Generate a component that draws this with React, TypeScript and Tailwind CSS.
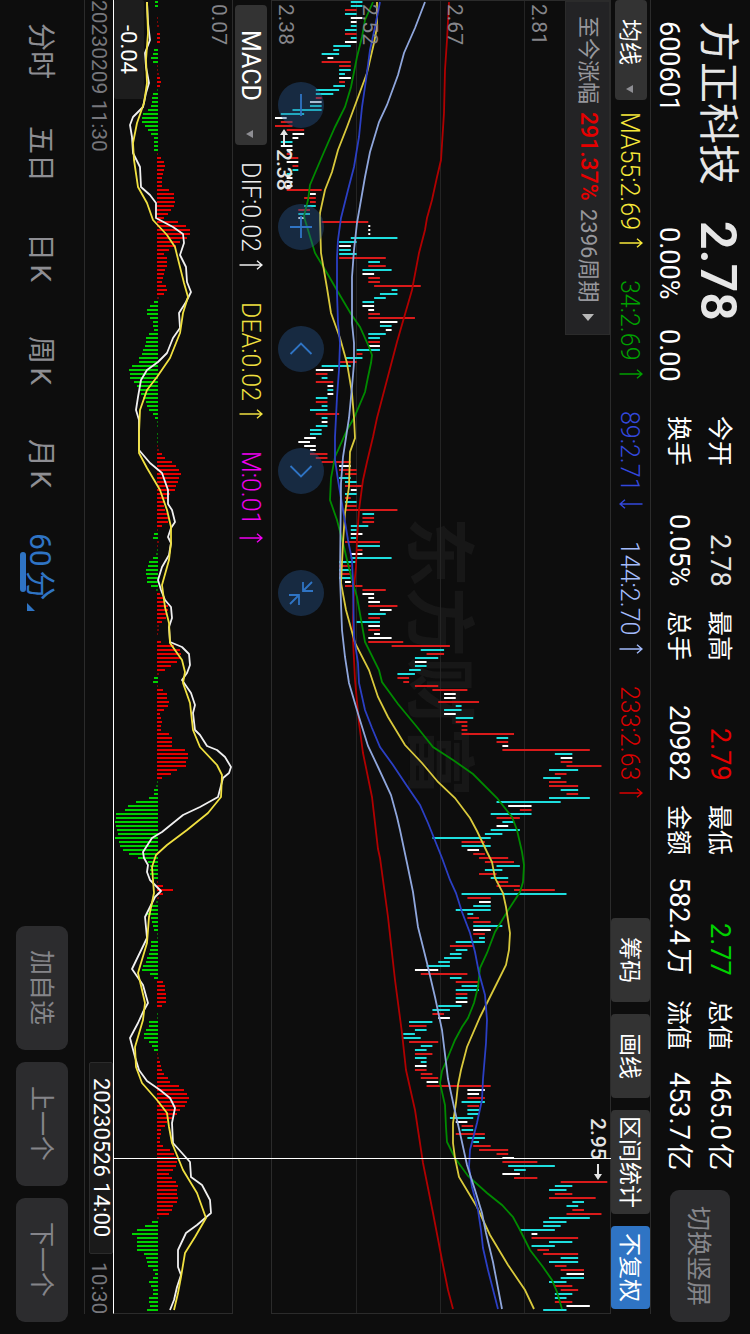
import type { ReactNode } from "react";
import clsx from "clsx";

// The page is a landscape screen held upright: everything is set in
// vertical-rl with sideways glyphs, so "rows" run from top to bottom.

const PLOT_LENGTH = 1314;
const STEP = 4;
const CURSOR = `${(1158 / PLOT_LENGTH) * 100}%`;

// colour, low and high in cents above 2.38
const CANDLES = `
c13-15 c13-15 r12-14 c12-14 w13-15 w13-14 c13-14 c12-14 r12-14 c13-14
w12-14 c10-13 c10-11 c8-11 w9-10 r8-13 r11-13 c11-13 c11-12 w11-13
r11-12 c10-12 c7-11 c7-10 r7-8 w6-8 c6-8 c3-8 c1-5 w0-2
r1-3 r0-3 r2-5 w3-5 w3-4 c1-3 w1-3 w2-3 r2-3 r2-4
w2-4 r3-4 c3-4 c2-3 w2-3 w2-3 w2-3 r2-8 w6-7 r5-7
r6-7 c5-7 r4-6 c4-6 w4-5 r8-16 w16-16 w16-16 w16-16 c13-21
c11-14 w11-13 c11-13 c11-14 r11-19 c16-18 r16-19 c15-20 w15-17 r16-18
r16-18 r17-25 c20-21 c18-21 c17-19 c15-17 w15-17 w16-17 r16-18 r16-24
w18-21 c18-20 w19-20 c16-19 c16-18 r16-18 w16-18 c14-18 r14-15 c12-15
r11-14 c8-13 w7-10 r7-9 c8-9 r7-10 w9-10 c9-10 w9-10 c7-9
r7-9 c8-9 c6-9 r7-11 c8-9 w8-9 c7-9 c6-8 c6-8 w5-7
w4-6 w5-7 w6-7 r6-9 r7-9 r8-13 w11-13 r11-14 r12-14 c11-13
c12-14 r12-15 w13-14 c12-14 r12-13 c12-14 r12-14 r12-21 c15-17 r15-17
r15-17 c13-16 c13-14 w13-15 c13-14 r12-18 c14-18 r14-15 w13-15 c13-20
c11-14 r11-13 c11-13 r11-13 c11-13 w12-13 r12-15 r15-19 w15-17 w16-17
w16-18 r16-21 w18-20 c16-19 r16-18 c14-18 w16-18 r16-18 w17-18 w16-20
r16-22 r20-30 c25-29 r26-29 c24-28 w24-26 c24-26 c23-25 c21-24 r21-23
r22-23 r24-28 r27-33 w29-31 w29-31 r28-35 c31-32 c29-32 w29-31 c31-34
r31-33 r32-33 r32-33 r32-41 c38-40 r38-40 w39-40 r39-54 c48-51 w49-51
r49-51 r50-56 c47-52 r48-50 c46-49 r47-50 r47-52 c49-52 r50-52 c47-54
c38-49 w40-44 r42-44 c37-44 r38-42 c39-41 w38-40 c37-42 c36-39 c27-37
r32-36 c32-37 w33-35 r34-36 r35-40 r36-41 c38-42 c36-39 r35-38 c37-40
r38-40 r38-42 r41-48 c32-50 r33-37 w35-37 c34-37 c31-37 c33-34 r33-35
r34-37 c34-39 w34-37 r34-36 c35-36 c31-36 r30-34 c31-33 c30-32 c29-32
c28-30 c26-30 w24-28 r25-33 c30-32 r31-35 c32-35 c31-35 r31-33 c31-33
w31-33 c28-32 c27-30 r27-29 w28-30 c23-27 r23-26 c24-26 c22-24 c22-25
r23-28 c25-27 c24-26 r24-27 c24-26 c25-26 w24-26 r24-26 r25-27 r25-28
w26-28 r26-37 w33-36 w33-35 r33-36 c32-36 r33-35 c33-35 c33-35 c30-34
w31-33 r32-34 c32-34 r31-36 c33-36 c34-35 r34-37 r35-40 r38-40 w39-41
r39-45 c40-48 c41-43 w39-42 r41-45 r49-57 c48-51 c47-50 r48-51 r47-55
c51-53 c50-52 r51-53 r50-56 c47-54 c46-50 c46-49 c42-48 w44-45 r44-52
c47-51 c44-48 r45-47 r46-52 c49-52 c47-52 r48-50 r49-53 w50-53 c49-53
c47-50 r48-51 r49-52 c48-51 c48-50 r48-51 w50-54 c46-50`
  .trim()
  .split(/\s+/);

const CANDLE_FILL: Record<string, string> = {
  c: "#1edede",
  r: "#d91a1a",
  w: "#ffffff",
};

const MACD_BARS = [
  -3, -3, 0, 0, 1, 1, 2, 0, 3, 3, 3, 0, -4, -5, -7, -5, 1, 1, 2, 3,
  4, 3, -1, -5, -6, -6, -7, -10, -15, -16, -16, -13, -10, -7, -4, -4, -4, -4, 1, 4,
  7, 8, 7, 6, 5, 5, 5, 12, 17, 17, 18, 17, 14, 11, 7, 21, 29, 33, 33, 30,
  23, 19, 12, 7, 10, 10, 10, 8, 7, 6, 5, 9, 10, 7, 2, -4, -8, -11, -11, -8,
  -5, -5, -4, -9, -12, -12, -13, -15, -16, -19, -19, -26, -29, -28, -28, -24, -21, -18, -17, -15,
  -12, -11, -9, -5, -3, -1, -1, 0, -1, -1, -1, 1, 2, 5, 8, 15, 19, 22, 24, 22,
  21, 19, 18, 13, 10, 8, 7, 8, 10, 11, 11, 5, 1, -4, -5, 2, 1, -1, -2, -5,
  -9, -10, -12, -12, -11, -11, -7, -2, 3, 6, 8, 11, 11, 10, 9, 5, 2, 2, 1, 0,
  4, 17, 23, 24, 23, 20, 14, 8, 2, -4, -5, 1, 6, 10, 10, 12, 11, 7, 3, 4,
  5, 4, 4, 12, 15, 15, 15, 28, 31, 31, 29, 29, 20, 14, 5, -1, -2, -4, -4, -9,
  -22, -30, -33, -42, -42, -43, -42, -41, -40, -43, -39, -38, -35, -29, -20, -10, -8, -8, -8, -4,
  1, 6, 16, 6, 2, -2, -6, -9, -11, -7, -6, -5, -4, -1, -1, -7, -7, -8, -9, -11,
  -12, -15, -16, -8, -4, 6, 8, 8, 9, 9, 9, 5, 0, -1, -1, -9, -9, -12, -14, -14,
  -9, -6, -4, 1, 2, 3, 4, 5, 7, 11, 13, 22, 27, 30, 32, 30, 28, 23, 20, 15,
  10, 8, 4, 4, 3, 3, 6, 13, 17, 19, 20, 19, 16, 12, 15, 19, 21, 20, 20, 21,
  20, 16, 15, 12, 2, -6, -13, -21, -26, -21, -21, -21, -21, -14, -12, -11, -10, -5, -3, -5,
  -9, -7, -5, -5, -9, -9, -8, -11,
];

const AVERAGES = [
  {
    stroke: "#b00000",
    points:
      "449,2 447,40 445,70 444,113 441,160 437,177 432,200 427,218 425,230 419,253 412,290 397,342 387,380 377,418 373,437 367,462 363,480 359,510 357,540 356,567 354,587 353,617 353,640 355,680 359,723 363,753 372,797 378,849 380,858 388,917 395,980 402,1033 406,1070 415,1110 423,1163 433,1213 442,1260 448,1290 453,1309",
  },
  {
    stroke: "#008a00",
    points:
      "373,2 365,20 362,37 357,57 351,87 345,107 335,127 324,152 315,173 310,185 308,200 304,216 305,220 315,253 327,273 338,292 351,314 360,327 369,347 372,355 371,363 368,377 365,392 354,418 347,430 335,457 331,478 330,500 337,520 343,543 347,560 352,580 357,597 362,625 365,642 379,670 382,682 398,704 417,727 433,747 453,760 473,774 497,798 512,817 517,830 522,852 524,865 523,882 520,892 507,912 495,932 487,953 480,968 478,987 474,1003 468,1018 462,1027 455,1040 448,1057 442,1071 440,1083 445,1105 446,1127 447,1142 455,1158 468,1176 487,1193 502,1205 513,1217 520,1230 530,1250 543,1267 552,1280 557,1292 562,1309",
  },
  {
    stroke: "#d9c93c",
    points:
      "377,2 377,27 374,43 367,73 357,100 347,127 338,150 332,172 325,190 320,213 320,220 321,253 327,288 331,313 340,338 347,363 352,393 354,418 355,438 350,452 349,487 345,513 343,543 341,583 346,610 355,643 369,670 378,697 388,717 405,745 422,763 438,782 455,798 470,818 477,831 487,852 492,862 495,878 503,893 506,907 510,933 509,950 506,965 497,983 480,1017 467,1047 461,1070 458,1085 456,1103 453,1123 453,1143 455,1158 459,1177 477,1207 490,1235 508,1265 525,1290 534,1309",
  },
  {
    stroke: "#2b3fc4",
    points:
      "380,2 375,27 370,50 366,80 362,107 359,137 354,167 348,190 341,218 338,240 337,257 337,293 338,323 340,343 339,370 337,397 335,437 335,460 338,480 343,510 348,540 352,560 353,583 354,637 358,663 359,683 365,710 372,728 380,747 393,765 407,786 420,805 428,823 442,858 450,880 456,893 462,912 470,933 475,952 479,973 485,995 487,1020 486,1043 483,1079 482,1100 477,1123 470,1150 469,1167 472,1187 478,1210 481,1230 483,1248 488,1270 498,1309",
  },
  {
    stroke: "#8fa6dc",
    points:
      "425,2 415,28 404,53 398,75 387,105 379,122 370,152 365,177 361,200 357,223 354,250 352,277 352,323 354,343 354,363 352,387 349,418 343,457 341,483 340,577 342,630 345,657 349,683 359,717 368,746 378,767 391,795 397,817 400,830 407,863 413,892 418,927 427,963 435,997 442,1030 448,1079 454,1107 460,1133 467,1165 475,1190 482,1213 486,1233 493,1262 502,1309",
  },
];

const DIF =
  "147,2 148,23 150,40 145,53 146,67 149,83 146,93 143,107 133,117 130,125 132,137 133,153 140,167 141,187 150,195 156,203 156,218 173,227 183,234 184,243 180,255 186,267 187,282 191,292 186,302 179,313 180,328 173,338 167,353 158,362 147,370 141,380 138,397 136,410 139,420 139,450 150,463 162,473 168,490 168,504 172,510 175,522 171,528 168,537 171,543 169,555 162,567 158,580 161,590 165,600 171,607 172,618 169,627 170,642 182,647 189,654 190,665 187,673 182,680 191,693 195,705 193,713 195,730 200,735 207,746 217,750 225,757 231,767 229,773 223,778 218,797 200,807 183,815 162,832 152,838 143,852 144,858 148,865 147,872 150,880 161,891 155,897 145,917 147,938 132,969 143,985 148,1003 143,1012 138,1023 130,1038 135,1057 139,1070 147,1081 160,1090 170,1098 175,1108 172,1123 173,1143 190,1162 191,1177 202,1185 210,1200 211,1213 197,1225 186,1233 178,1250 178,1267 181,1275 177,1287 174,1300 170,1310";

const DEA =
  "147,2 148,33 146,60 147,83 144,103 137,123 133,143 134,160 138,187 147,203 153,220 167,235 175,247 180,267 184,283 188,297 183,313 180,333 170,358 157,377 147,390 140,410 139,433 139,453 147,468 160,490 167,510 171,527 171,543 169,560 162,585 165,607 169,623 170,643 182,660 185,672 183,683 190,703 193,730 200,747 217,765 222,775 221,797 208,813 187,830 167,845 156,855 152,867 154,893 149,917 147,943 138,973 142,990 145,1003 143,1020 135,1047 136,1067 142,1083 157,1100 167,1113 169,1127 172,1143 183,1170 197,1193 206,1218 195,1237 185,1253 181,1277 178,1293 174,1310";

const QUOTES = [
  { label: "今开", value: "2.78", tone: "text-[#e3e3e3]" },
  { label: "最高", value: "2.79", tone: "text-[#e60000]" },
  { label: "最低", value: "2.77", tone: "text-[#00d200]" },
  { label: "总值", value: "465.0亿", tone: "text-white" },
  { label: "换手", value: "0.05%", tone: "text-white" },
  { label: "总手", value: "20982", tone: "text-white" },
  { label: "金额", value: "582.4万", tone: "text-white" },
  { label: "流值", value: "453.7亿", tone: "text-white" },
];

const MA_ITEMS = [
  { text: "MA55:2.69", up: true, tone: "text-[#f7e83a]" },
  { text: "34:2.69", up: true, tone: "text-[#00a000]" },
  { text: "89:2.71", up: false, tone: "text-[#3348dc]" },
  { text: "144:2.70", up: true, tone: "text-[#a3bbfb]" },
  { text: "233:2.63", up: true, tone: "text-[#dc0000]" },
];

const MACD_ITEMS = [
  { text: "DIF:0.02", up: true, tone: "text-[#f0f0f0]" },
  { text: "DEA:0.02", up: true, tone: "text-[#f0e040]" },
  { text: "M:0.01", up: true, tone: "text-[#f000f0]" },
];

const PRICE_LABELS = [
  { text: "2.38", place: "left-[0.6%]" },
  { text: "2.52", place: "left-[25.4%]" },
  { text: "2.67", place: "left-[50.6%]" },
  { text: "2.81", place: "left-[75.5%]" },
];

const PERIODS = ["分时", "五日", "日K", "周K", "月K"];

function TrendArrow({ up }: { up: boolean }) {
  return (
    <svg className="h-[10px] w-6" viewBox="0 0 24 10" fill="none" stroke="currentColor" strokeWidth="1.4">
      <path d={up ? "M0.5 5H23M18 0.7L23 5L18 9.3" : "M23.5 5H1M6 0.7L1 5L6 9.3"} />
    </svg>
  );
}

function Caret() {
  return (
    <svg className="h-2 w-[7px] fill-[#8e8e93]" viewBox="0 0 7 8">
      <path d="M7 0V8L0 4Z" />
    </svg>
  );
}

function Indicator({ text, up, tone }: { text: string; up: boolean; tone: string }) {
  return (
    <li className={clsx("flex items-center gap-2 text-[25px] font-light leading-8", tone)}>
      <span className="pr-[3px]">{text}</span>
      <TrendArrow up={up} />
    </li>
  );
}

function ToolButton({ children, className }: { children: ReactNode; className: string }) {
  return (
    <button
      className={clsx(
        "flex w-full items-center justify-center rounded-sm pr-[3px] text-[23px] leading-8 text-white",
        className,
      )}
    >
      {children}
    </button>
  );
}

function GrayButton({ children, className }: { children: ReactNode; className: string }) {
  return (
    <button
      className={clsx(
        "flex items-center justify-center rounded-[9px] bg-[#2c2c2e] pr-[3px] text-[25px] leading-8 text-[#85858a]",
        className,
      )}
    >
      {children}
    </button>
  );
}

function RoundButton({ label, d }: { label: string; d: string }) {
  return (
    <button aria-label={label} className="flex size-[46px] items-center justify-center rounded-full bg-[#295892]/40">
      <svg className="size-6" viewBox="0 0 24 24" fill="none" stroke="#2f74c4" strokeWidth="1.8">
        <path d={d} />
      </svg>
    </button>
  );
}

function Header() {
  return (
    <header className="flex w-[99px] items-center pr-[2px]">
      <div className="mt-[21px] flex h-[395px] w-full flex-col justify-between pr-[5px]">
        <div className="flex w-[50px] items-center text-[#e6e6e6]">
          <h1 className="h-[200px] text-[41px] leading-[50px]">方正科技</h1>
          <p className="text-[50px] font-semibold leading-[50px]">2.78</p>
        </div>
        <div className="flex w-9 items-center text-[27px] leading-9 text-white">
          <p className="h-[206px]">600601</p>
          <p className="h-[102px]">0.00%</p>
          <p>0.00</p>
        </div>
      </div>
      <dl className="grid min-h-0 flex-1 grid-cols-4 gap-x-6 pr-[2px] text-white [text-autospace:normal]">
        {QUOTES.map((q) => (
          <div key={q.label} className="flex items-baseline justify-between leading-10">
            <dt className="text-[25px]">{q.label}</dt>
            <dd className={clsx("text-[27px]", q.tone)}>{q.value}</dd>
          </div>
        ))}
      </dl>
      <GrayButton className="mt-5 mb-3 h-[132px] w-[60px]">切换竖屏</GrayButton>
    </header>
  );
}

function Toolbar() {
  return (
    <div className="flex w-[41px] items-center border-r border-l border-[#2b2b2b]">
      <button className="flex h-[100px] w-8 items-center justify-between rounded-sm bg-[#333333] pt-[19px] pr-[3px] pb-[7px] text-[23px] leading-8 text-white">
        均线
        <Caret />
      </button>
      <ul className="mt-3 flex flex-1 items-center gap-8">
        {MA_ITEMS.map((item) => (
          <Indicator key={item.text} {...item} />
        ))}
      </ul>
      <div className="mb-[5px] flex w-full gap-3">
        <ToolButton className="h-[84px] bg-[#333333]">筹码</ToolButton>
        <ToolButton className="h-[84px] bg-[#333333]">画线</ToolButton>
        <ToolButton className="h-[104px] bg-[#333333]">区间统计</ToolButton>
        <ToolButton className="h-[83px] bg-[#2f74c4]">不复权</ToolButton>
      </div>
    </div>
  );
}

function PriceChart() {
  return (
    <section className="relative min-w-0 flex-1 border-t border-b border-l border-[#2b2b2b]">
      <p className="absolute top-[39.3%] left-[49%] -translate-x-1/2 text-[70px] font-bold leading-[80px] text-[#171717]">
        东方财富
      </p>
      <svg className="absolute inset-0 h-full w-full" viewBox="272 1 338 1312" preserveAspectRatio="none">
        {[356, 440, 524].map((x) => (
          <rect key={x} x={x} y={0} width={1} height={PLOT_LENGTH} fill="#242424" />
        ))}
        {CANDLES.map((c, i) => {
          const [low, high] = c.slice(1).split("-").map(Number);
          return (
            <rect
              key={i}
              x={275 + low * 5.83}
              y={1 + i * STEP}
              width={Math.max(2, (high - low) * 5.83)}
              height={2}
              fill={CANDLE_FILL[c[0]]}
            />
          );
        })}
        {AVERAGES.map((line) => (
          <polyline key={line.stroke} points={line.points} fill="none" stroke={line.stroke} strokeWidth="1.8" />
        ))}
      </svg>

      {PRICE_LABELS.map((label) => (
        <span key={label.text} className={clsx("absolute top-[3px] text-[21px] leading-6 text-[#85858a]", label.place)}>
          {label.text}
        </span>
      ))}

      <span className="absolute top-[128px] left-0 flex items-center gap-1 text-[21px] font-medium leading-6 text-[#e3e3e3]">
        <svg className="h-4 w-2" viewBox="0 0 8 16" fill="#e3e3e3">
          <path d="M4 0L8 6H5V16H3V6H0Z" />
        </svg>
        2.38
      </span>
      <span className="absolute top-[1117px] right-0 flex items-center gap-1 text-[21px] font-medium leading-6 text-[#e3e3e3]">
        2.95
        <svg className="h-4 w-2" viewBox="0 0 8 16" fill="#e3e3e3">
          <path d="M4 16L8 10H5V0H3V10H0Z" />
        </svg>
      </span>

      <div className="absolute top-0 right-0 flex h-[334px] w-[45px] items-center gap-2 border border-[#2b2b2b] bg-[#232325] pt-[14px] text-[22px] leading-8 text-[#97979c]">
        <span>至今涨幅</span>
        <span className="text-[23px] font-medium text-[#e60000]">291.37%</span>
        <span>2396周期</span>
        <svg className="mt-1 h-[7px] w-3 fill-[#b8b8b8]" viewBox="0 0 12 7">
          <path d="M0 0H12L6 7Z" />
        </svg>
      </div>

      <div className="absolute top-[81px] left-[6px] flex gap-[76px]">
        <RoundButton label="缩小" d="M12 1V23" />
        <RoundButton label="放大" d="M12 1V23M1 12H23" />
        <RoundButton label="左移" d="M1.500 17L12 6.500L22.500 17" />
        <RoundButton label="右移" d="M1.500 7L12 17.500L22.500 7" />
        <RoundButton label="退出全屏" d="M23 1L14 10M14 1V10H24M1 23L10 14M10 24V14H0" />
      </div>
    </section>
  );
}

function MacdBar() {
  return (
    <div className="flex w-[39px] items-center border-l border-[#2b2b2b] pr-[2px]">
      <button className="mt-[5px] flex h-[140px] w-8 items-center justify-between rounded-sm bg-[#333333] pt-[25px] pr-[3px] pb-[7px] text-[25px] leading-8 text-white">
        MACD
        <Caret />
      </button>
      <ul className="mt-[17px] flex items-center gap-8">
        {MACD_ITEMS.map((item) => (
          <Indicator key={item.text} {...item} />
        ))}
      </ul>
    </div>
  );
}

function MacdChart() {
  return (
    <section className="relative w-[119px] border-b border-l border-b-[#2b2b2b] border-l-white">
      <span className="absolute top-0 left-0 flex h-[99px] w-[30px] items-center justify-center rounded-xs bg-[#1d1d1d] pr-[2px] text-[22px] leading-6 text-white">
        -0.04
      </span>
      <span className="absolute top-1 right-px text-[21px] leading-6 text-[#85858a]">0.07</span>
      <svg className="absolute inset-0 h-full w-full" viewBox="114 0 118 1313" preserveAspectRatio="none">
        {MACD_BARS.map((v, i) => (
          <rect
            key={i}
            x={v < 0 ? 158 + v : 157}
            y={1 + i * STEP}
            width={Math.abs(v)}
            height={2}
            fill={v < 0 ? "#00d200" : "#e60000"}
            opacity={Math.abs(v) < 3 ? 0.5 : 1}
          />
        ))}
        <polyline points={DIF} fill="none" stroke="#f0f0f0" strokeWidth="1.8" strokeLinejoin="round" />
        <polyline points={DEA} fill="none" stroke="#f0e040" strokeWidth="1.8" strokeLinejoin="round" />
      </svg>
    </section>
  );
}

function TimeAxis() {
  return (
    <div className="relative mb-5 flex w-[29px] items-center justify-between border-l border-[#2b2b2b] text-[21px] leading-6 text-[#77777c]">
      <time>20230209 11:30</time>
      <time>10:30</time>
      <time
        className="absolute right-0 flex h-[192px] w-6 -translate-y-1/2 items-center justify-center rounded-xs border border-[#2b2b2b] bg-[#1a1a1a] text-[22px] text-white"
        style={{ top: CURSOR }}
      >
        20230526 14:00
      </time>
    </div>
  );
}

function PeriodBar() {
  return (
    <footer className="flex w-[84px] items-center justify-between pb-3">
      <nav className="flex items-center text-[28px] leading-[37px] text-[#8e8e93] [text-autospace:normal]">
        {PERIODS.map((p) => (
          <button key={p} className="h-[103px] pr-[3px]">
            {p}
          </button>
        ))}
        <button className="relative h-[103px] pr-[3px] text-[30px] text-[#2f74c4]">
          60分
          <span className="absolute top-[37px] -left-[2px] h-10 w-[6px] rounded-full bg-[#2f74c4]" />
          <svg className="absolute bottom-[7px] left-[5px] size-2 fill-[#2f74c4]" viewBox="0 0 8 8">
            <path d="M0 0L8 8H0Z" />
          </svg>
        </button>
      </nav>
      <div className="flex gap-3">
        <GrayButton className="h-[124px] w-[52px]">加自选</GrayButton>
        <GrayButton className="h-[124px] w-[52px]">上一个</GrayButton>
        <GrayButton className="h-[124px] w-[52px]">下一个</GrayButton>
      </div>
    </footer>
  );
}

export default function App() {
  return (
    <div className="flex h-screen w-full flex-col overflow-hidden bg-[#0d0d0d] font-[Roboto,'Noto_Sans_CJK_SC',sans-serif] whitespace-nowrap [text-orientation:sideways] [writing-mode:vertical-rl]">
      <Header />
      <main className="relative mb-5 flex min-w-0 flex-1 flex-col">
        <Toolbar />
        <PriceChart />
        <MacdBar />
        <MacdChart />
        <div className="absolute right-10 left-[1px] h-px bg-white" style={{ top: CURSOR }} />
      </main>
      <TimeAxis />
      <PeriodBar />
    </div>
  );
}
